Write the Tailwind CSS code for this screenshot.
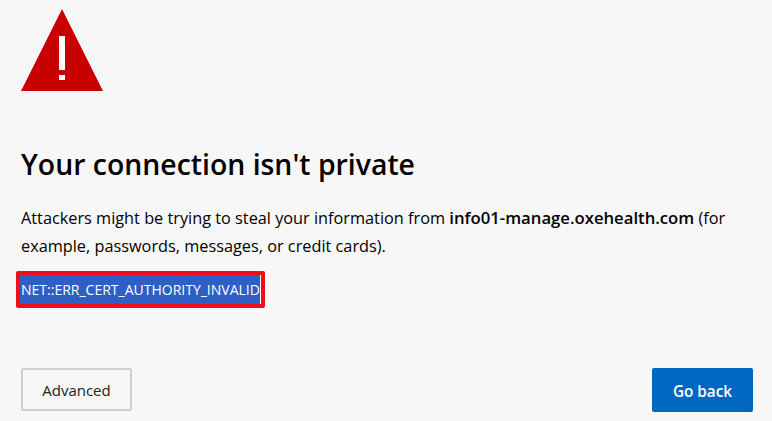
<!DOCTYPE html>
<html lang="en">
<head>
  <meta charset="UTF-8" />
  <title>Privacy error</title>
  <script src="https://cdn.jsdelivr.net/npm/@tailwindcss/browser@4"></script>
</head>
<body class="bg-[#f7f7f7] h-[421px] overflow-hidden font-['Open_Sans',sans-serif] text-black">
  <div class="flex flex-col h-full pl-[21px] pr-[19px] pt-[9px] pb-[9px]">
    <!-- Warning icon -->
    <svg class="w-[82px] h-[82px] shrink-0" viewBox="0 0 82 82">
      <path d="M41 0 L82 82 L0 82 Z" fill="#c80000"/>
      <rect x="38" y="27" width="6" height="34" fill="#fff"/>
      <rect x="38" y="66" width="6" height="5" fill="#fff"/>
    </svg>

    <h1 class="mt-[53px] text-[28.4px] leading-[40px] font-semibold whitespace-nowrap">Your connection isn't private</h1>
    <p class="mt-[20px] text-[16.3px] leading-[28px] w-[720px]">Attackers might be trying to steal your information from <b class="font-semibold text-[16.7px]">info01-manage.oxehealth.com</b> (for example, passwords, messages, or credit cards).</p>

    <div class="mt-[11px] -ml-[5px] w-[249px] h-[37px] border-[4px] border-[#f00d1c] rounded-[2px] flex">
      <span class="bg-[#2f5fc4] text-white text-[14px] leading-[29px] w-[240px] pl-[1px] whitespace-nowrap">NET::ERR_CERT_AUTHORITY_INVALID</span>
    </div>

    <div class="mt-auto flex justify-between items-start">
      <button class="w-[111px] h-[43px] pt-[1px] bg-[#f7f7f7] border-2 border-[#cfcfcf] rounded-[2px] text-[15px] text-[#222]">Advanced</button>
      <button class="w-[101px] h-[44px] pt-[2px] bg-[#0067c0] rounded-[2px] text-[15.3px] font-semibold text-white">Go back</button>
    </div>
  </div>
</body>
</html>
